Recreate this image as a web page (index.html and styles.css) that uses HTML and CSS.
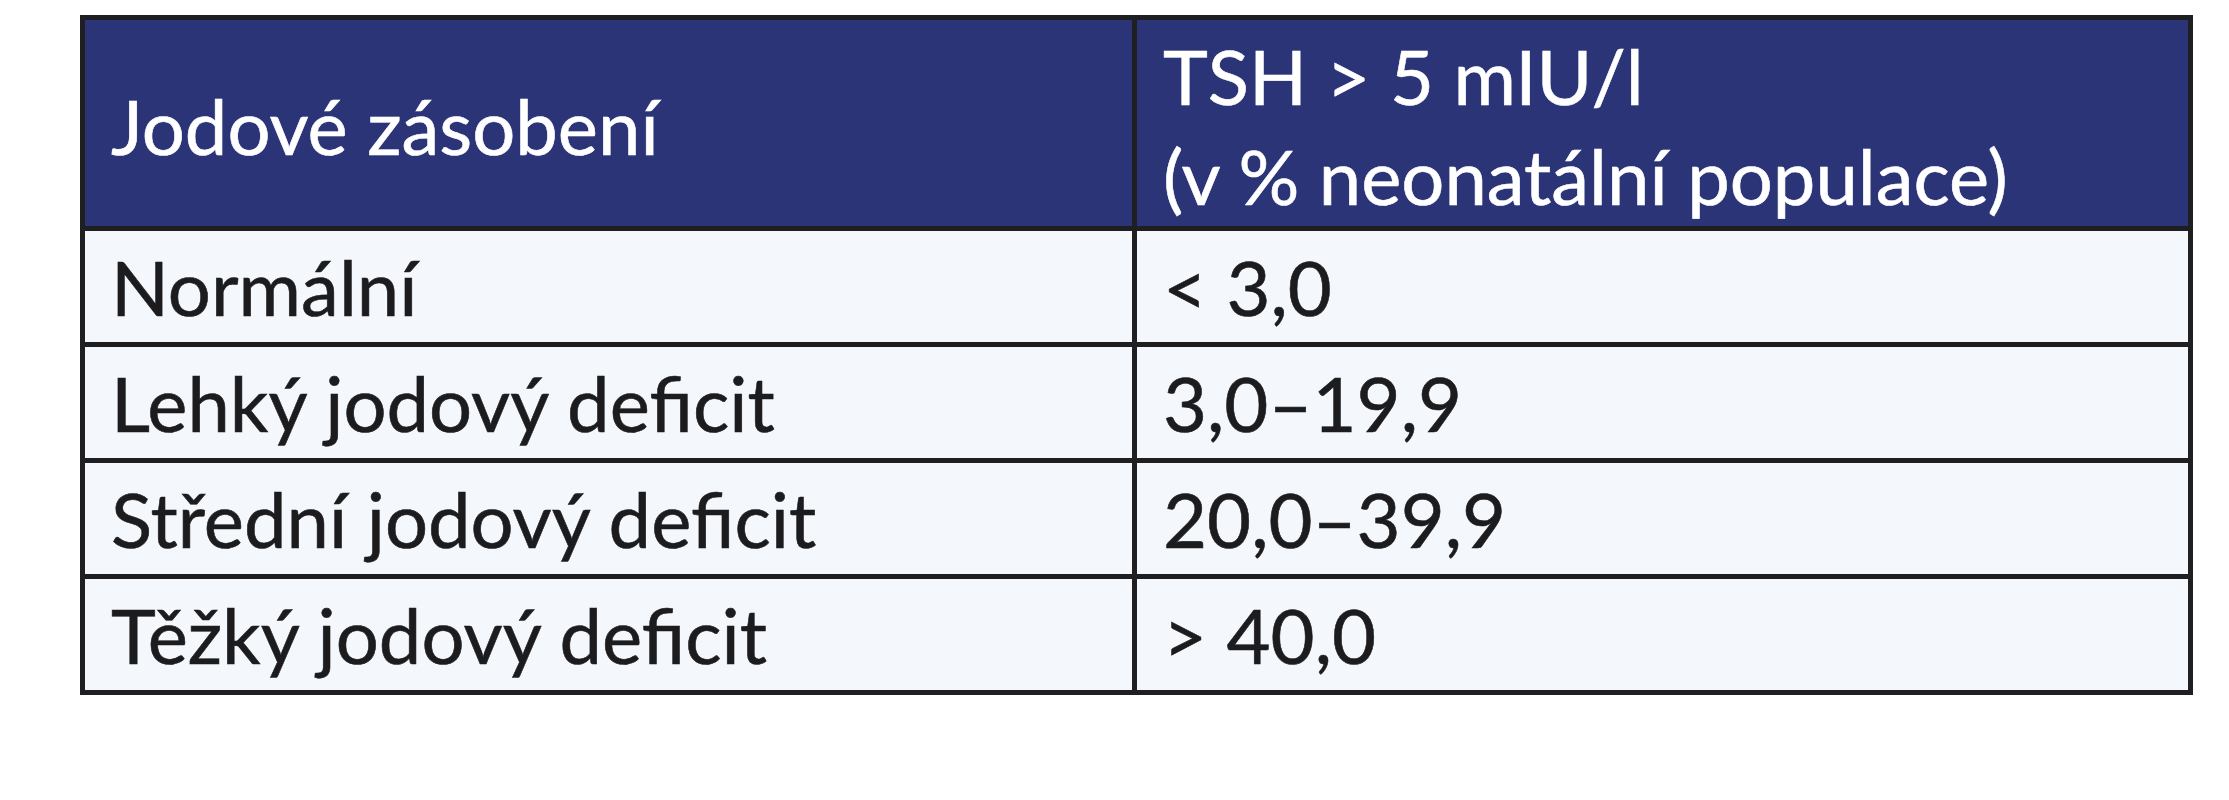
FILE: index.html
```html
<!DOCTYPE html>
<html lang="cs">
<head>
<meta charset="utf-8">
<title>Jodové zásobení</title>
<link rel="stylesheet" href="styles.css">
</head>
<body>
<table class="iodine">
  <thead>
    <tr>
      <th class="col-a">Jodové zásobení</th>
      <th class="col-b">TSH &gt; 5 mIU/l<br>(v % neonatální populace)</th>
    </tr>
  </thead>
  <tbody>
    <tr><td>Normální</td><td>&lt; 3,0</td></tr>
    <tr><td>Lehký jodový deficit</td><td>3,0–19,9</td></tr>
    <tr><td>Střední jodový deficit</td><td>20,0–39,9</td></tr>
    <tr><td>Těžký jodový deficit</td><td>&gt; 40,0</td></tr>
  </tbody>
</table>
</body>
</html>
```
FILE: styles.css
```css
html, body {
  margin: 0;
  padding: 0;
  background: #ffffff;
}

body {
  font-family: Lato, "Open Sans", sans-serif;
}

.iodine {
  margin: 15px 0 0 80px;
  width: 2113px;
  border-collapse: separate;
  border-spacing: 0;
  border-top: 5px solid #1f1f22;
  border-left: 5px solid #1f1f22;
  table-layout: fixed;
  font-size: 76px;
  line-height: 100px;
}

.iodine th,
.iodine td {
  box-sizing: border-box;
  border-right: 5px solid #1f1f22;
  border-bottom: 5px solid #1f1f22;
  text-align: left;
  vertical-align: middle;
  padding: 6px 20px 5px 26px;
  font-weight: 400;
  -webkit-text-stroke: 0.6px currentColor;
}

.iodine .col-a {
  width: 1052px;
}

.iodine th {
  background: #2b3477;
  color: #ffffff;
  padding-top: 6px;
  padding-bottom: 0;
  height: 211px;
}

.iodine td {
  background: #f4f8fc;
  color: #1c1c1f;
}
```
